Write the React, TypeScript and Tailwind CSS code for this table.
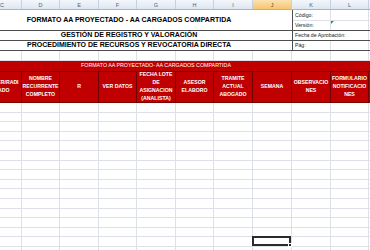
import React from 'react';

const cols = ['C', 'D', 'E', 'F', 'G', 'H', 'I', 'J', 'K', 'L', 'M'];
const widths = ['w-[39px]', 'w-[38px]', 'w-[39px]', 'w-[38px]', 'w-[39px]', 'w-[38px]', 'w-[39px]', 'w-[39px]', 'w-[39px]', 'w-[38px]', 'w-[39px]'];

const headers: string[][] = [
  ['NUMER/RADI', 'CADO'],
  ['NOMBRE', 'RECURRENTE', 'COMPLETO'],
  ['R'],
  ['VER DATOS'],
  ['FECHA LOTE', 'DE', 'ASIGNACION', '(ANALISTA)'],
  ['ASESOR', 'ELABORO'],
  ['TRAMITE', 'ACTUAL', 'ABOGADO'],
  ['SEMANA'],
  ['OBSERVACIO', 'NES'],
  ['FORMULARIO', 'NOTIFICACIO', 'NES'],
  [''],
];

const rows = Array.from({ length: 16 });

const GridRow: React.FC<{ h: string; selected?: number }> = ({ h, selected }) => (
  <div className={`flex ml-[-17px] ${h} border-b border-[#dde0e6]`}>
    {widths.map((w, i) => (
      <div key={i} className={`${w} shrink-0 border-r border-[#dde0e6] relative`}>
        {selected === i && (
          <div className="absolute -left-[1px] -top-[1px] -right-[0px] -bottom-[0px] border-2 border-[#2b2b2b]">
            <div className="absolute -right-[3px] -bottom-[3px] w-[4px] h-[4px] bg-[#2b2b2b] border border-white" />
          </div>
        )}
      </div>
    ))}
  </div>
);

export default function App() {
  return (
    <div className="w-[370px] h-[250px] overflow-hidden bg-white font-['Liberation_Sans',Arial,sans-serif]">
      {/* Column letters */}
      <div className="flex ml-[-17px] h-[10px] border-b border-[#9eb6ce] bg-gradient-to-b from-[#f4f7fb] to-[#dde6f1]">
        {cols.map((c, i) => (
          <div
            key={c}
            className={`${widths[i]} shrink-0 border-r border-[#c3d1e2] text-center text-[5.5px] leading-[10px] text-[#4f5f78] ${
              c === 'J' ? 'bg-gradient-to-b from-[#fbe2b2] to-[#f6c46c] text-[#5a4a2a]' : ''
            }`}
          >
            {c}
          </div>
        ))}
      </div>

      {/* Title block */}
      <div className="flex h-[21px] border-b border-[#4d4d4d]">
        <div className="w-[309px] ml-[-17px] shrink-0 flex items-center justify-center pr-[17px] text-[7px] font-bold text-black">
          FORMATO AA PROYECTADO - AA CARGADOS COMPARTIDA
        </div>
        <div className="flex flex-col border-l border-[#4d4d4d] flex-1">
          <div className="flex h-[11px] border-b border-[#dde0e6]">
            <div className="w-[38px] shrink-0 border-r border-[#dde0e6] pl-[2px] text-[5.2px] leading-[11px] text-[#222]">Código:</div>
            <div className="w-[38px] shrink-0 border-r border-[#dde0e6]" />
          </div>
          <div className="flex h-[9px]">
            <div className="w-[38px] shrink-0 border-r border-[#dde0e6] pl-[2px] text-[5.2px] leading-[9px] text-[#222]">Versión:</div>
            <div className="w-[38px] shrink-0 border-r border-[#dde0e6] relative">
              <div className="absolute left-0 top-0 w-0 h-0 border-t-[3px] border-r-[3px] border-t-[#1e9e3a] border-r-transparent" />
            </div>
          </div>
        </div>
      </div>
      <div className="flex h-[10px] border-b border-[#4d4d4d]">
        <div className="w-[309px] ml-[-17px] shrink-0 flex items-center justify-center pr-[17px] text-[7px] font-bold text-black">
          GESTIÓN DE REGISTRO Y VALORACIÓN
        </div>
        <div className="flex-1 border-l border-[#4d4d4d] flex">
          <div className="w-[76px] shrink-0 border-r border-[#dde0e6] pl-[2px] text-[5.2px] leading-[9px] text-[#222] whitespace-nowrap">Fecha de Aprobación:</div>
        </div>
      </div>
      <div className="flex h-[10px] border-b border-[#4d4d4d]">
        <div className="w-[309px] ml-[-17px] shrink-0 flex items-center justify-center pr-[17px] text-[7px] font-bold text-black">
          PROCEDIMIENTO DE RECURSOS Y REVOCATORIA DIRECTA
        </div>
        <div className="flex-1 border-l border-[#4d4d4d] flex">
          <div className="w-[38px] shrink-0 border-r border-[#dde0e6] pl-[2px] text-[5.2px] leading-[9px] text-[#222]">Pág:</div>
          <div className="w-[38px] shrink-0 border-r border-[#dde0e6]" />
        </div>
      </div>
      <GridRow h="h-[10px]" />

      {/* Red table header */}
      <div className="bg-[#c00000] text-white">
        <div className="h-[11px] border-b border-[#7a0000] flex items-center justify-center pr-[58px] text-[5.3px]">
          FORMATO AA PROYECTADO- AA CARGADOS COMPARTIDA
        </div>
        <div className="flex ml-[-17px] h-[31px] border-b border-[#7a0000]">
          {headers.map((lines, i) => (
            <div
              key={i}
              className={`${widths[i]} shrink-0 border-r border-[#6e0000] flex flex-col items-center justify-center text-[5.2px] leading-[7.8px] font-bold whitespace-nowrap`}
            >
              {lines.map((l, j) => (
                <span key={j}>{l}</span>
              ))}
            </div>
          ))}
        </div>
      </div>

      {/* Empty grid rows */}
      {rows.map((_, r) => (
        <GridRow key={r} h="h-[9.6px]" selected={r === 14 ? 7 : undefined} />
      ))}
    </div>
  );
}
